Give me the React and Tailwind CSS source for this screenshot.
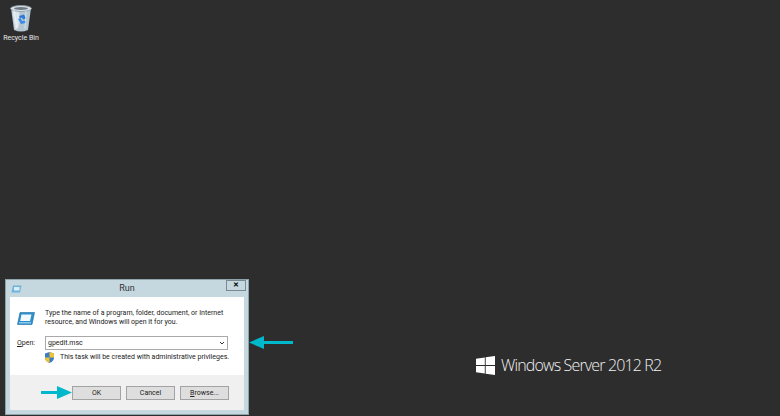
import React from 'react';

function RecycleBin() {
  return (
    <svg width="24" height="28" viewBox="0 0 24 28">
      <path d="M2 4 L5 26 Q12 29 19 26 L22 4 Z" fill="#b4c6d2" />
      <path d="M3 5 L6 25 Q12 27 10 6 Z" fill="#dbe5ec" />
      <ellipse cx="12" cy="4.5" rx="10.5" ry="3" fill="#d5dfe5" stroke="#8d9aa3" strokeWidth="0.8" />
      <ellipse cx="12" cy="4.5" rx="7" ry="1.4" fill="#6d7982" />
      <path d="M10 12 l5 -1.5 l2 4 l-3 1 l-1 -2 l-2 1 Z" fill="#2f79d6" />
      <path d="M9 15 l3 5 l5 -1 l-1 -2.500 l-3 .5 l-1.500 -3 Z" fill="#3a8de6" />
      <path d="M5 6 L8 24 M17 7 L16 25" stroke="#ffffff" strokeWidth="1" opacity="0.5" />
    </svg>
  );
}

function WindowsLogo() {
  return (
    <svg width="19" height="19" viewBox="0 0 19 19" fill="#ffffff">
      <path d="M0 2.700 L8.800 1.400 V9 H0 Z" />
      <path d="M9.700 1.300 L19 0 V9 H9.700 Z" />
      <path d="M0 9.900 H8.800 V17.600 L0 16.300 Z" />
      <path d="M9.700 9.900 H19 V19 L9.700 17.700 Z" />
    </svg>
  );
}

function RunIcon({ small }) {
  if (small) {
    return (
      <svg width="11" height="8" viewBox="0 0 11 8">
        <path d="M2 0.500 H10.500 L9 7.500 H0.500 Z" fill="#6fb2dc" />
        <rect x="3" y="2" width="5.500" height="3.500" fill="#d8edf8" />
      </svg>
    );
  }
  return (
    <svg width="18" height="13" viewBox="0 0 18 13">
      <path d="M3 0.500 H17.500 L15 12.500 H0.500 Z" fill="#2f8fcb" stroke="#1d6c9f" strokeWidth="0.6" />
      <path d="M4.500 2.500 H14.500 L13 9 H3.200 Z" fill="#f2f8fb" />
      <rect x="2" y="10" width="12" height="1.500" fill="#8cc8ea" />
    </svg>
  );
}

function Shield() {
  return (
    <svg width="9" height="11" viewBox="0 0 9 11">
      <path d="M4.500 0 L9 1.500 V5.500 Q9 9 4.500 11 Q0 9 0 5.500 V1.500 Z" fill="#3d7cc9" />
      <path d="M4.500 0 L9 1.500 V5.500 H4.500 Z" fill="#f0c330" />
      <path d="M4.500 5.500 V11 Q0 9 0 5.500 Z" fill="#f0c330" />
    </svg>
  );
}

function CyanArrow({ tail, className }) {
  // arrow pointing left by default, the OK one gets flipped
  return (
    <svg width={tail} height="13" viewBox={`0 0 ${tail} 13`} className={className}>
      <path d={`M0 6.500 L15 0 V5 H${tail} V8 H15 V13 Z`} fill="#00b8cc" />
    </svg>
  );
}

function WinButton({ children }) {
  return (
    <button className="w-[49px] h-[14px] bg-[#dedede] border border-[#a3a3a3] text-[7px] leading-none text-[#222] flex items-center justify-center">
      {children}
    </button>
  );
}

export default function App() {
  return (
    <div className="relative w-[780px] h-[416px] overflow-hidden bg-[#2d2d2d] font-['Roboto',sans-serif]">
      {/* Recycle bin */}
      <div className="absolute left-0 top-[4px] w-[42px] flex flex-col items-center">
        <RecycleBin />
        <span className="text-[7px] leading-[10px] mt-[1px] text-[#e8e8e8] whitespace-nowrap">Recycle Bin</span>
      </div>

      {/* Branding */}
      <div className="absolute left-[476px] top-[356px] flex items-center gap-[6px]">
        <WindowsLogo />
        <span className="font-['Open_Sans',sans-serif] font-light text-[16px] leading-[19px] tracking-[-0.85px] text-[#f2f2f2] whitespace-nowrap">Windows Server 2012 R2</span>
      </div>

      {/* Run dialog */}
      <div className="absolute left-[5px] top-[279px] w-[244px] h-[136px] bg-[#c5d8df] border border-[#8fa3aa] flex flex-col px-[4px] pb-[4px]">
        <div className="h-[17px] shrink-0 flex items-start relative">
          <span className="mt-[5px] ml-[1px]"><RunIcon small /></span>
          <span className="flex-1 text-center text-[9px] leading-[17px] text-[#333] pl-[6px]">Run</span>
          <div className="w-[20px] h-[11px] bg-[#c5d8df] border border-[#7c8a90] flex items-center justify-center text-[7px] font-bold leading-none text-black mr-[-2px]">✕</div>
        </div>
        <div className="flex-1 bg-white flex flex-col">
          <div className="flex-1 pl-[7px] pr-[14px] pt-[12px]">
            <div className="flex gap-[10px]">
              <span className="mt-[3px]"><RunIcon /></span>
              <p className="text-[7px] leading-[9px] text-[#222] whitespace-nowrap">
                Type the name of a program, folder, document, or Internet<br />
                resource, and Windows will open it for you.
              </p>
            </div>
            <div className="flex items-center mt-[9px]">
              <span className="w-[28px] text-[7px] text-[#222]"><u>O</u>pen:</span>
              <div className="w-[183px] h-[14px] border border-[#a9a9a9] flex items-center justify-between px-[2px] text-[7px] text-[#222]">
                <span>gpedit.msc</span>
                <svg width="6" height="4" viewBox="0 0 6 4" fill="none" stroke="#333" strokeWidth="1"><path d="M1 1 L3 3 L5 1" /></svg>
              </div>
            </div>
            <div className="flex items-center gap-[6px] ml-[28px] mt-[2px]">
              <Shield />
              <span className="text-[7px] leading-[11px] text-[#222] whitespace-nowrap">This task will be created with administrative privileges.</span>
            </div>
          </div>
          <div className="h-[35px] shrink-0 bg-[#f0f0f0] flex items-start justify-end gap-[5px] pt-[11px] pr-[15px]">
            <WinButton>OK</WinButton>
            <WinButton>Cancel</WinButton>
            <WinButton><span><u>B</u>rowse...</span></WinButton>
          </div>
        </div>
      </div>

      {/* Callout arrows */}
      <CyanArrow tail={44} className="absolute left-[249px] top-[336px]" />
      <CyanArrow tail={31} className="absolute left-[41px] top-[386px] -scale-x-100" />
    </div>
  );
}
